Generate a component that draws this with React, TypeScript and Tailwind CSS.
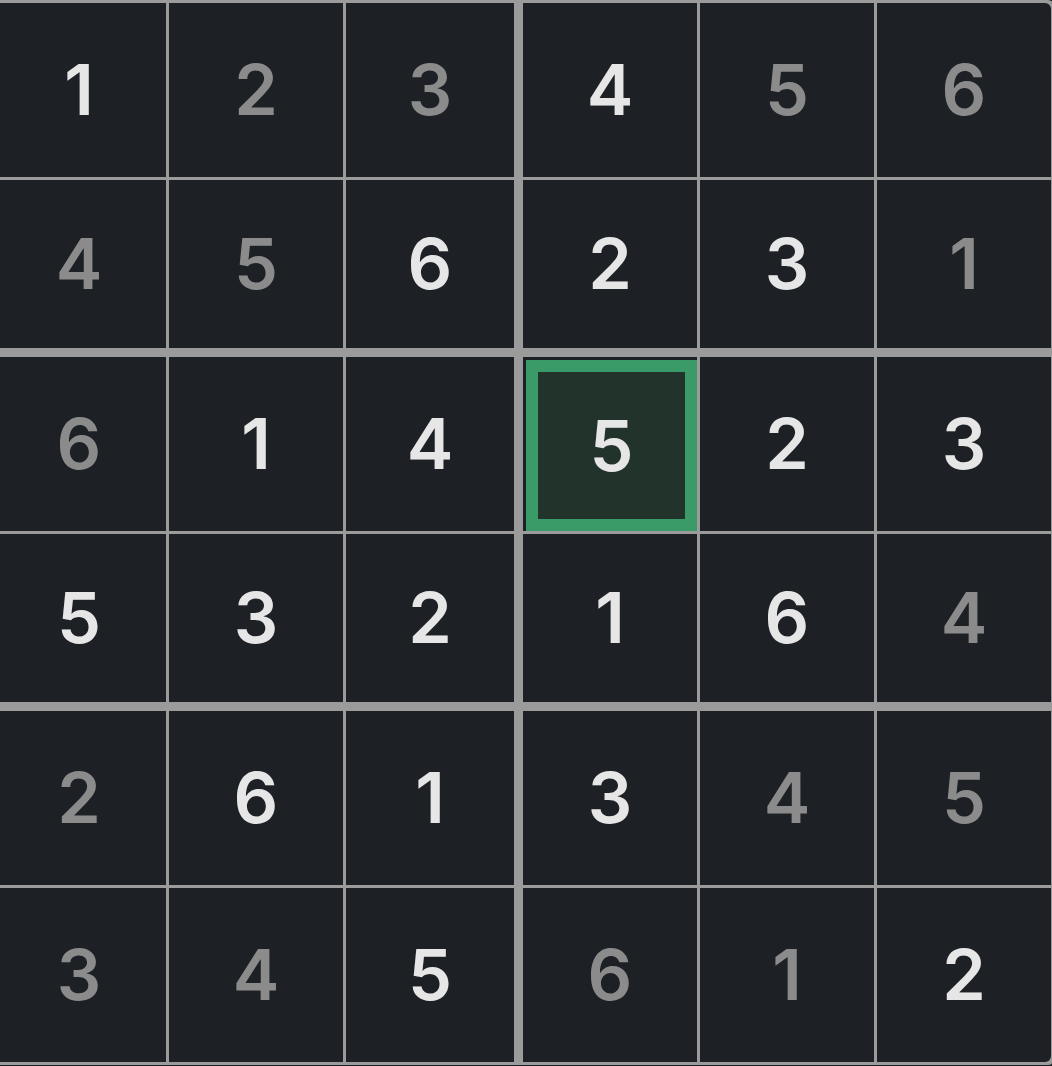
import React from "react";

const grid: [number, boolean][][] = [
  [[1, true], [2, false], [3, false], [4, true], [5, false], [6, false]],
  [[4, false], [5, false], [6, true], [2, true], [3, true], [1, false]],
  [[6, false], [1, true], [4, true], [5, true], [2, true], [3, true]],
  [[5, true], [3, true], [2, true], [1, true], [6, true], [4, false]],
  [[2, false], [6, true], [1, true], [3, true], [4, false], [5, false]],
  [[3, false], [4, false], [5, true], [6, false], [1, false], [2, true]],
];

function Cell({ v, bright, r, c }: { v: number; bright: boolean; r: number; c: number }) {
  const selected = r === 2 && c === 3;
  const cls = [
    "h-[174px] flex bg-[#1d2025] border-[#9b9b9b]",
    c === 2 ? "border-r-[6px]" : "",
    r === 1 || r === 3 ? "border-b-[6px]" : "",
    r === 0 && c === 0 ? "rounded-tl-md" : "",
    r === 0 && c === 5 ? "rounded-tr-md" : "",
    r === 5 && c === 0 ? "rounded-bl-md" : "",
    r === 5 && c === 5 ? "rounded-br-md" : "",
    selected ? "pt-[3px] pl-[3px]" : "items-center justify-center",
  ].join(" ");
  const txt = bright ? "text-[#e6e6e6]" : "text-[#8b8b8b]";
  if (selected) {
    return (
      <div className={cls}>
        <div className="flex-1 flex items-center justify-center border-[12px] border-[#3a9a68] bg-[#22332c]">
          <span className={`text-[70px] leading-none font-semibold ${txt}`}>{v}</span>
        </div>
      </div>
    );
  }
  return (
    <div className={cls}>
      <span className={`text-[70px] leading-none font-semibold ${txt}`}>{v}</span>
    </div>
  );
}

export default function App() {
  return (
    <div className="w-[1052px] h-[1066px] overflow-hidden bg-[#1d2025] font-['Inter',sans-serif]">
      <div className="ml-[-11px] w-[1065px] grid grid-cols-[repeat(6,174px)] gap-[3px] p-[3px] bg-[#9b9b9b] rounded-md">
        {grid.map((row, r) =>
          row.map(([v, b], c) => <Cell key={`${r}-${c}`} v={v} bright={b} r={r} c={c} />)
        )}
      </div>
    </div>
  );
}
